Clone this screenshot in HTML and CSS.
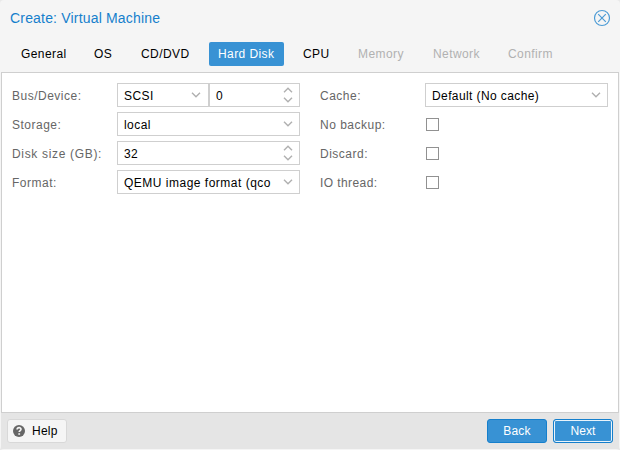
FILE: index.html
```
<!DOCTYPE html>
<html lang="en">
<head>
<meta charset="utf-8">
<title>Create: Virtual Machine</title>
<link rel="stylesheet" href="styles.css">
</head>
<body>
<div class="window">
  <header class="header">
    <h1 class="title">Create: Virtual Machine</h1>
    <svg class="close" width="18" height="18" viewBox="0 0 18 18"><circle cx="9" cy="9" r="7.5"/><path d="M5.2 5.2l7.6 7.6M12.8 5.2l-7.6 7.6"/></svg>
  </header>
  <nav class="tabs">
    <span class="tab general">General</span>
    <span class="tab os">OS</span>
    <span class="tab cd">CD/DVD</span>
    <span class="tab disk active">Hard Disk</span>
    <span class="tab cpu">CPU</span>
    <span class="tab memory disabled">Memory</span>
    <span class="tab network disabled">Network</span>
    <span class="tab confirm disabled">Confirm</span>
  </nav>
  <main class="panel">
    <section class="column">
      <div class="row"><span class="label">Bus/Device:</span>
        <div class="field bus"><span class="value">SCSI</span><svg class="arrow" width="10" height="6" viewBox="0 0 10 6"><path d="M1 .7l4 4 4-4"/></svg></div>
        <div class="field"><span class="value">0</span><svg class="arrow" width="10" height="16" viewBox="0 0 10 16"><path d="M1 5.3l4-4 4 4M1 10.7l4 4 4-4"/></svg></div>
      </div>
      <div class="row"><span class="label">Storage:</span>
        <div class="field"><span class="value">local</span><svg class="arrow" width="10" height="6" viewBox="0 0 10 6"><path d="M1 .7l4 4 4-4"/></svg></div>
      </div>
      <div class="row"><span class="label size">Disk size (GB):</span>
        <div class="field"><span class="value">32</span><svg class="arrow" width="10" height="16" viewBox="0 0 10 16"><path d="M1 5.3l4-4 4 4M1 10.7l4 4 4-4"/></svg></div>
      </div>
      <div class="row"><span class="label">Format:</span>
        <div class="field"><span class="value image">QEMU image format (qco</span><svg class="arrow" width="10" height="6" viewBox="0 0 10 6"><path d="M1 .7l4 4 4-4"/></svg></div>
      </div>
    </section>
    <section class="column">
      <div class="row"><span class="label">Cache:</span>
        <div class="field"><span class="value default">Default (No cache)</span><svg class="arrow" width="10" height="6" viewBox="0 0 10 6"><path d="M1 .7l4 4 4-4"/></svg></div>
      </div>
      <div class="row"><span class="label">No backup:</span><span class="check"></span></div>
      <div class="row"><span class="label">Discard:</span><span class="check"></span></div>
      <div class="row"><span class="label thread">IO thread:</span><span class="check"></span></div>
    </section>
  </main>
  <footer class="footer">
    <div class="button help"><svg width="12" height="12" viewBox="0 0 12 12"><circle cx="6" cy="6" r="6" fill="#666"/><path d="M4.1 4.5C4.2 2 8.1 2.100 8 4.300C8 5.600 6.200 5.500 6.200 7.100" fill="none" stroke="#f5f5f5" stroke-width="1.600"/><path d="M5.300 8.200h1.800v1.600H5.300z" fill="#f5f5f5"/></svg><span>Help</span></div>
    <div class="button primary back">Back</div>
    <div class="button primary next">Next</div>
  </footer>
</div>
</body>
</html>
```
FILE: styles.css
```
* { box-sizing: border-box; }
body { margin: 0; background: #e9e9e9; font: 12px/24px "Liberation Sans", Arial, sans-serif; color: #000; }
.window { width: 620px; height: 450px; display: flex; flex-direction: column; background: #f5f5f5; border-radius: 4px; overflow: hidden; white-space: nowrap; }
.header { height: 42px; display: flex; justify-content: space-between; padding: 9px 9px 0 10px; }
.title { margin: 0; font-size: 14px; line-height: 18px; font-weight: 400; letter-spacing: .18px; color: #157fcc; }
.close { fill: none; stroke: #4c9bd5; stroke-width: 1.2; }
.tabs { height: 30px; display: flex; gap: 10px; padding-left: 12px; }
.tab { height: 24px; padding-left: 9px; letter-spacing: .42px; border-radius: 2px; }
.general { width: 63px; }
.os { width: 37px; }
.cd { width: 67px; }
.disk { width: 75px; }
.cpu { width: 45px; }
.memory { width: 65px; }
.network { width: 65px; }
.confirm { width: 62px; }
.active { background: #3892d4; color: #fff; }
.disabled { color: #b1b1b1; }
.panel { height: 341px; margin: 0 1px; background: #fff; border: 1px solid #cfcfcf; padding: 10px 9px 0 10px; display: flex; gap: 20px; }
.column { width: 288px; display: flex; flex-direction: column; gap: 5px; }
.row { height: 24px; display: flex; align-items: center; }
.label { width: 105px; flex: none; color: #666; letter-spacing: .5px; padding-top: 1px; }
.size { letter-spacing: .67px; }
.thread { letter-spacing: .42px; }
.field { flex: 1; min-width: 0; height: 24px; border: 1px solid #cfcfcf; display: flex; justify-content: space-between; align-items: center; padding: 0 6px; }
.bus { flex: 0 0 92px; padding-right: 7px; }
.value { letter-spacing: .45px; padding-top: 2px; }
.image { letter-spacing: .5px; }
.default { letter-spacing: .4px; }
.arrow { flex: none; fill: none; stroke: #b0b0b0; stroke-width: 1.4; }
.check { width: 13px; height: 13px; margin-left: 1px; border: 1px solid #919191; background: #fff; }
.footer { height: 36px; margin: 0 1px; padding: 6px; display: flex; background: #e5e5e5; }
.button { width: 60px; height: 24px; line-height: 22px; border: 1px solid #d8d8d8; border-radius: 3px; background: #f5f5f5; text-align: center; letter-spacing: .25px; }
.help { display: flex; align-items: center; gap: 7px; padding-left: 5px; margin-right: auto; }
.primary { background: #3892d4; border-color: #157fcc; color: #fff; }
.back { margin-right: 6px; }
.next { letter-spacing: .1px; box-shadow: inset 0 0 0 1px #eaf4fb; }
```
